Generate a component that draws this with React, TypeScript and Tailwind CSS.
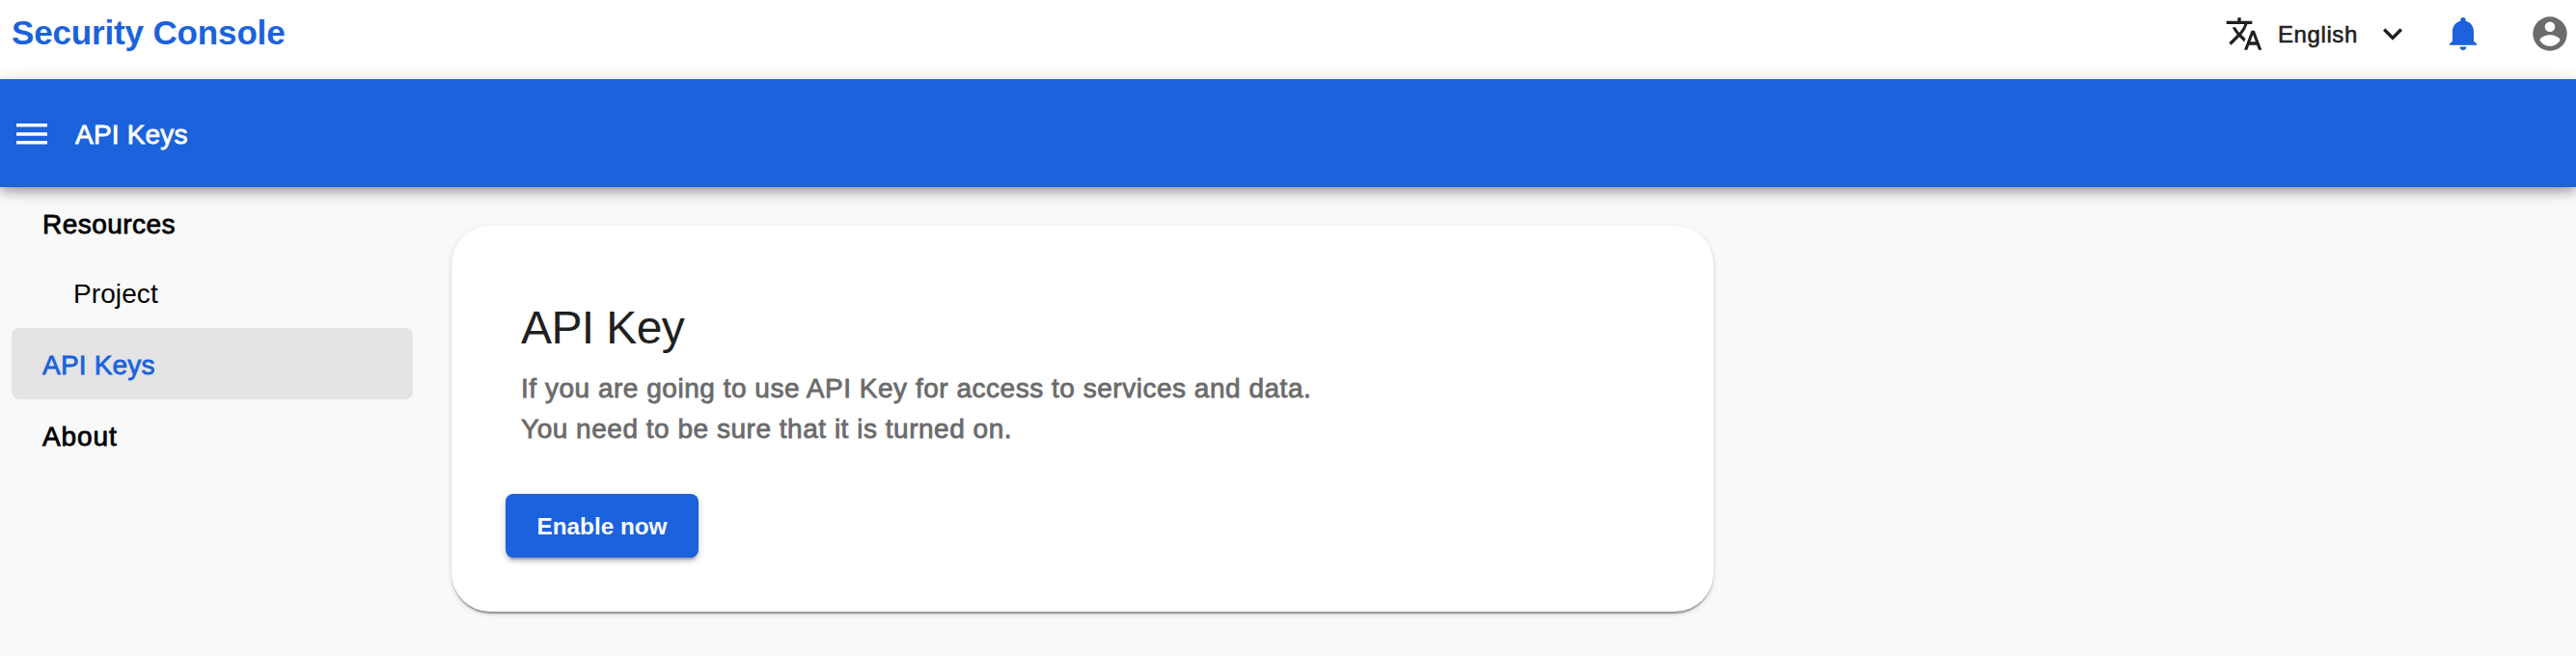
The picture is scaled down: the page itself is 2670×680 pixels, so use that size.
import { MdTranslate, MdExpandMore } from "react-icons/md";

const medium = "[-webkit-text-stroke:0.8px_currentColor]";

function Bell() {
  return (
    <svg viewBox="0 0 28 34" className="h-[34px] w-7 shrink-0 text-[#1b62dc]" fill="currentColor" aria-hidden="true">
      <path d="M14 0c1.700 0 2.700 1.200 2.700 2.700v1C22 5 25 9.500 25 14.500v10.200L28 27.200v1.600H0v-1.600l3-2.500V14.500C3 9.500 6 5 11.300 3.700v-1C11.300 1.200 12.300 0 14 0z" />
      <path d="M10.500 30.600h7c0 1.900-1.600 3.400-3.500 3.400s-3.500-1.500-3.500-3.400z" />
    </svg>
  );
}

function Account() {
  return (
    <svg viewBox="0 0 36 36" className="h-9 w-9 shrink-0" aria-hidden="true">
      <circle cx="18" cy="18" r="17.700" fill="#6b6b6b" />
      <circle cx="18" cy="10.800" r="5.300" fill="#fff" />
      <path d="M7.500 24.700c.2-3.600 7-5.500 10.500-5.500s10.300 1.900 10.500 5.500c-2.300 3.900-6.200 6.100-10.500 6.100s-8.200-2.200-10.500-6.100z" fill="#fff" />
    </svg>
  );
}

export default function App() {
  return (
    <div className="flex h-[680px] w-full flex-col overflow-hidden bg-[#f9f9f9] font-['Liberation_Sans',Arial,sans-serif] text-black">
      <header className="flex h-[82px] shrink-0 items-start justify-between bg-white pl-3 pr-[9px]">
        <h1 className="mt-[14px] text-[35px] leading-10 font-bold tracking-[-0.15px] whitespace-nowrap text-[#1b62dc]">Security Console</h1>
        <div className="flex h-[69px] items-center text-[#1f1f1f]">
          <MdTranslate className="size-10 shrink-0" />
          <span className="ml-[15px] w-[85px] pt-0.5 text-[24px] tracking-[0.6px] whitespace-nowrap [-webkit-text-stroke:0.6px_currentColor]">English</span>
          <MdExpandMore className="ml-[14px] size-10 shrink-0" />
          <div className="ml-[39px] flex pt-px"><Bell /></div>
          <div className="ml-[58px] flex"><Account /></div>
        </div>
      </header>

      <div className="relative z-10 flex h-28 shrink-0 items-center bg-[#1b62dc] text-white shadow-[0_4px_8px_-2px_rgba(0,0,0,0.2),0_8px_10px_0_rgba(0,0,0,0.14),0_2px_20px_0_rgba(0,0,0,0.12)]">
        <svg viewBox="0 0 32 22" className="mt-0.5 ml-[17px] h-[22px] w-8" fill="currentColor" aria-hidden="true">
          <path d="M0 0h32v3.600H0zM0 9.200h32v3.600H0zM0 18h32v3.600H0z" />
        </svg>
        <span className={`ml-[29px] pt-1 text-[28px] tracking-[0.2px] ${medium}`}>API Keys</span>
      </div>

      <div className="flex flex-1">
        <nav className="flex w-[440px] shrink-0 flex-col pl-3 text-[28px]">
          <a className={`h-[74px] pl-8 leading-[77px] tracking-[0.45px] ${medium}`}>Resources</a>
          <a className="h-[72px] pl-16 leading-[74px] tracking-[0.1px]">Project</a>
          <a className={`h-[74px] w-[416px] rounded-lg bg-[#e4e4e4] pl-8 leading-[77px] tracking-[0.2px] text-[#1b62dc] ${medium}`}>API Keys</a>
          <a className={`h-[74px] pl-8 leading-[77px] tracking-[0.9px] ${medium}`}>About</a>
        </nav>

        <main className="pt-10 pl-7">
          <section className="flex h-[400px] w-[1308px] flex-col items-start rounded-[40px] bg-white pt-[81px] pl-14 shadow-[0_4px_2px_-2px_rgba(0,0,0,0.28),0_2px_2px_0_rgba(0,0,0,0.14),0_2px_6px_0_rgba(0,0,0,0.12)]">
            <h2 className="pl-4 text-[48px] leading-[50px] tracking-[-0.6px] text-[#1f1f1f]">API Key</h2>
            <p className={`mt-[17px] pl-4 text-[28px] leading-[42px] tracking-[0.52px] whitespace-nowrap text-[#6b6b6b] ${medium}`}>
              If you are going to use API Key for access to services and data.
              <br />
              You need to be sure that it is turned on.
            </p>
            <button className="mt-[46px] h-[66px] w-[200px] rounded-lg bg-[#1b62dc] pt-0.5 text-[24.3px] font-bold text-white shadow-[0_6px_2px_-4px_rgba(0,0,0,0.2),0_4px_4px_0_rgba(0,0,0,0.14),0_2px_10px_0_rgba(0,0,0,0.12)]">
              Enable now
            </button>
          </section>
        </main>
      </div>
    </div>
  );
}
